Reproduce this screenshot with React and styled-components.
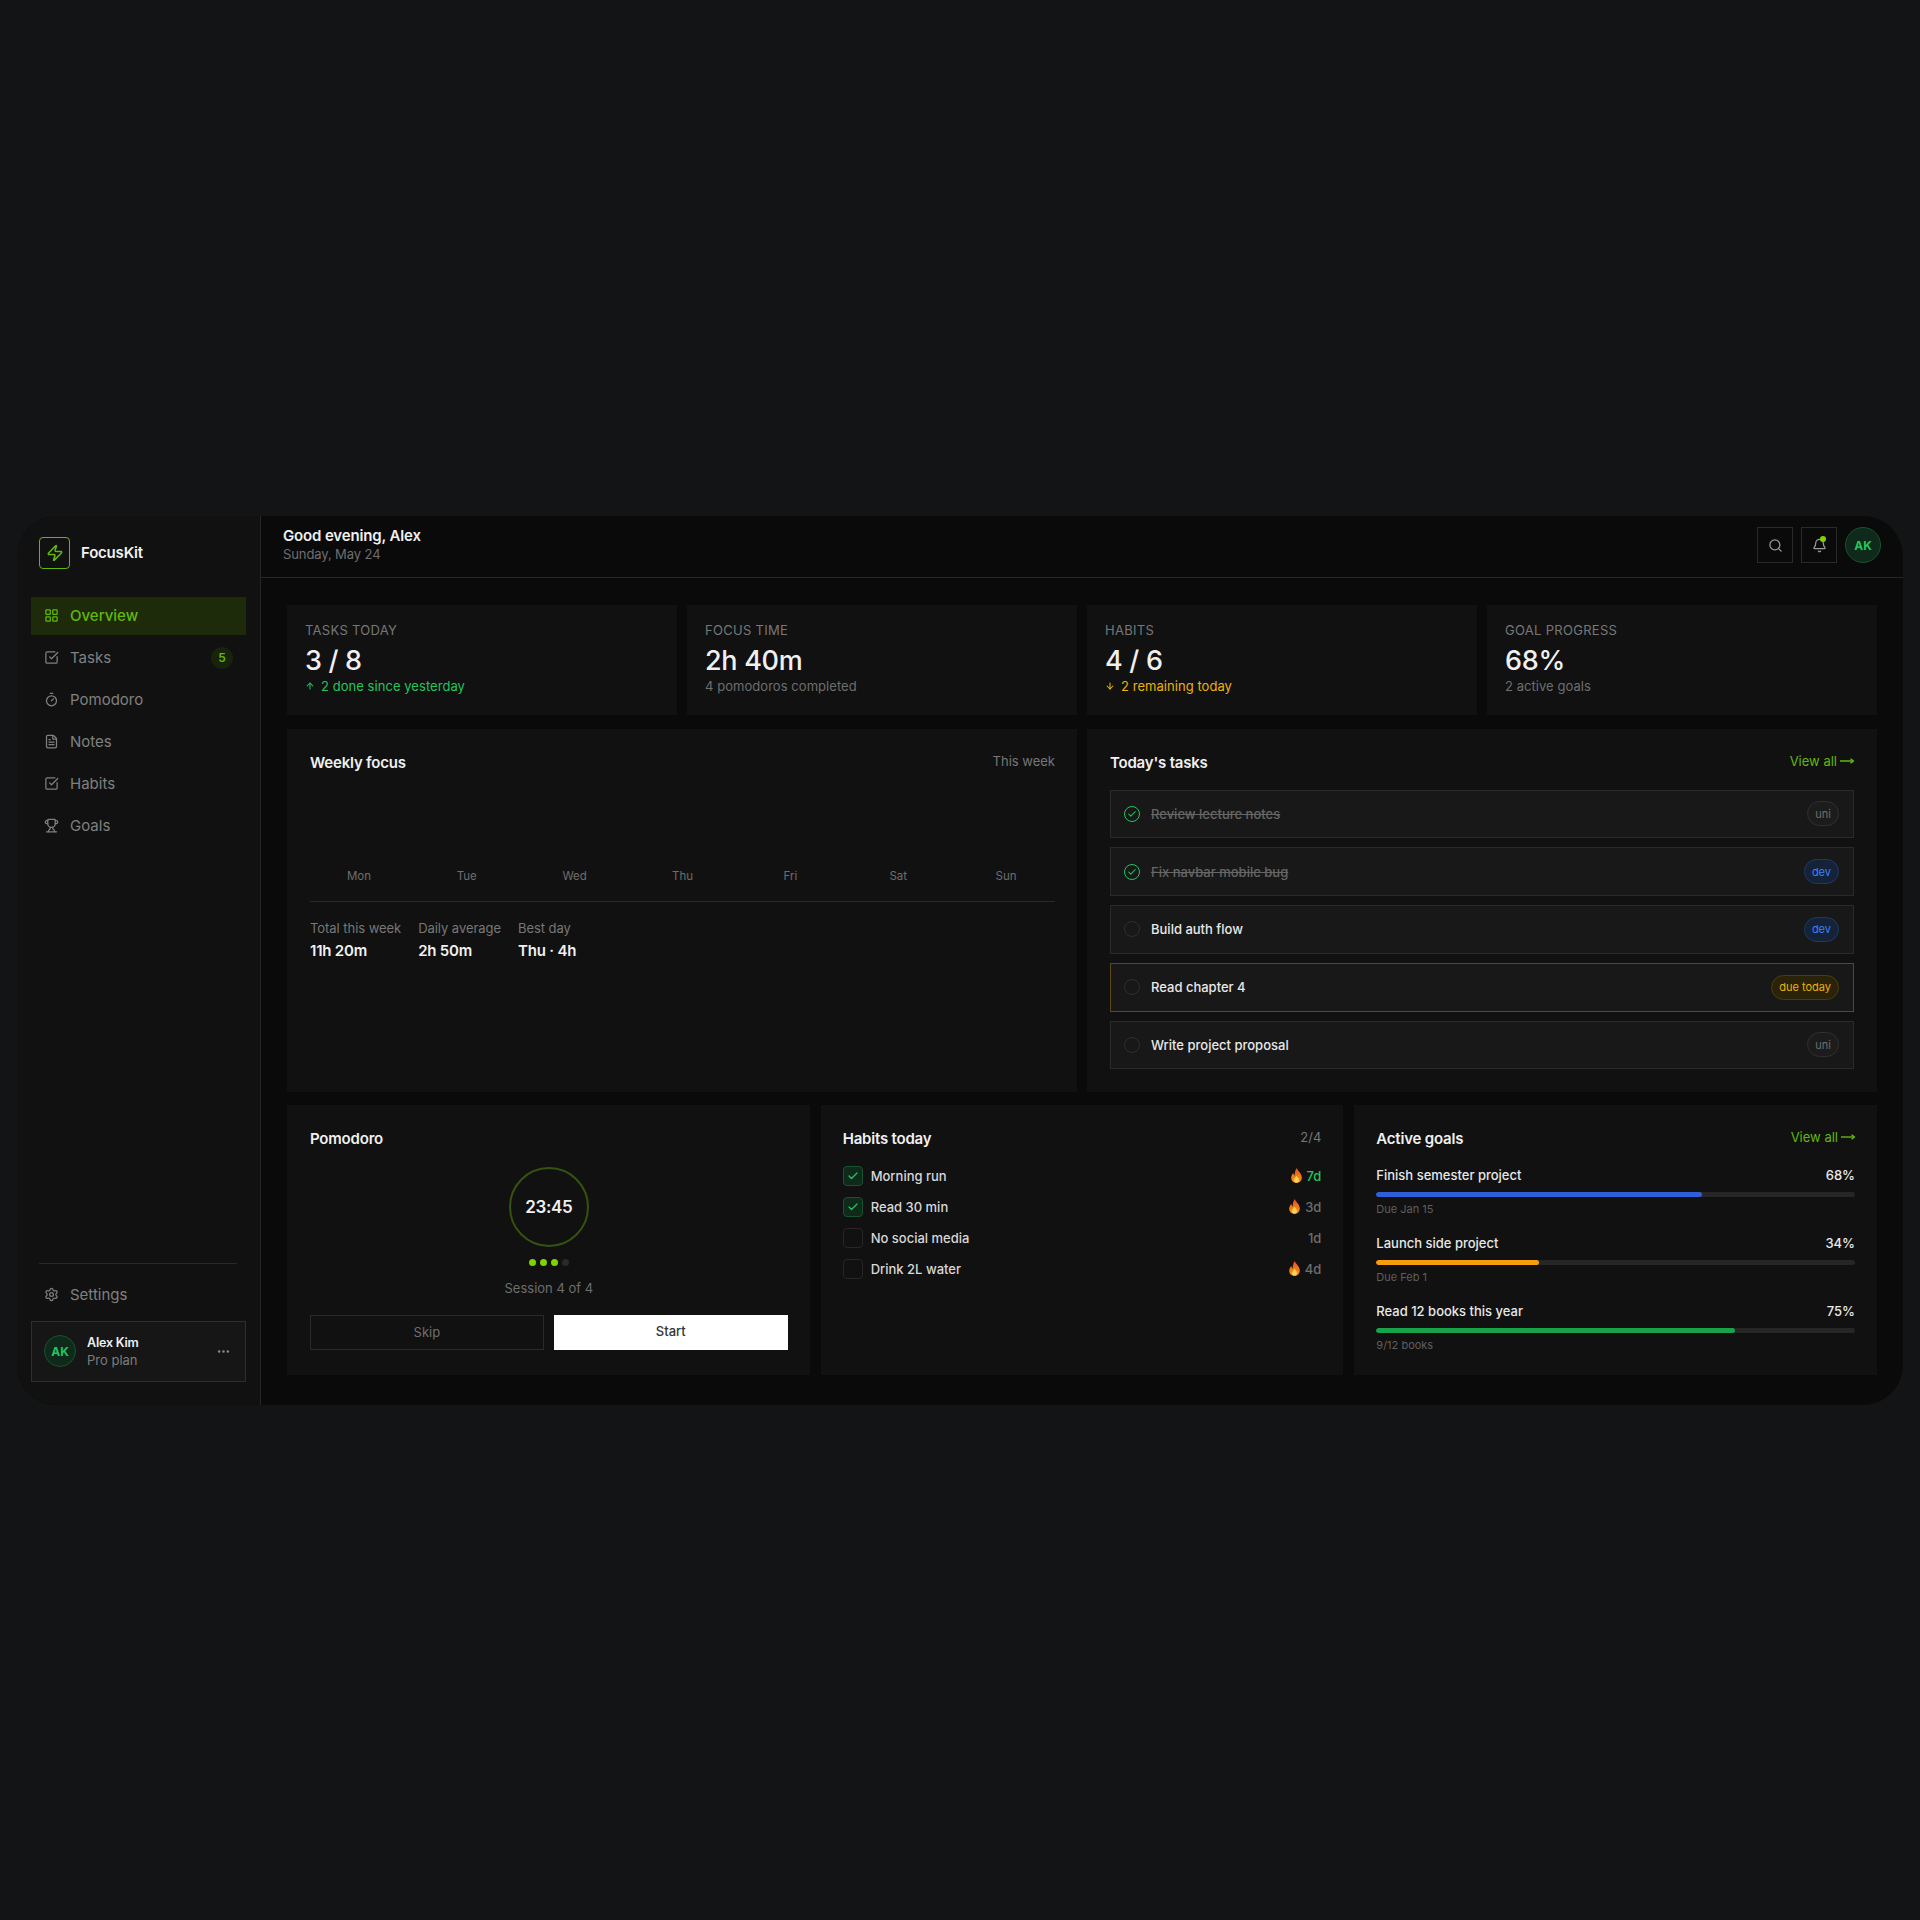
import React from "react";
import styled, { createGlobalStyle } from "styled-components";
import {
  LayoutGrid,
  SquareCheckBig,
  Timer,
  FileText,
  Trophy,
  Settings,
  Search,
  Bell,
  Zap,
  Check,
  MoreHorizontal,
  ArrowUp,
  ArrowDown,
} from "lucide-react";

const LIME = "#62b80a";
const GREEN = "#22c55e";
const AMBER = "#eab308";

const GlobalStyle = createGlobalStyle`
  html, body { margin: 0; padding: 0; background: #131415; }
  body { font-family: "Inter", "Liberation Sans", sans-serif; color: #f0f0f0; }
  * { box-sizing: border-box; }
`;

const Page = styled.div`
  width: 1920px;
  height: 1920px;
  display: flex;
  align-items: center;
  justify-content: center;
`;

const Frame = styled.div`
  width: 1886px;
  height: 889px;
  display: flex;
  border-radius: 40px;
  overflow: hidden;
  background: #0a0a0a;
`;

const Sidebar = styled.aside`
  width: 244px;
  flex-shrink: 0;
  display: flex;
  flex-direction: column;
  padding: 21px 14px 23px;
  background: #111111;
  border-right: 1px solid #262626;
`;

const Brand = styled.div`
  display: flex;
  align-items: center;
  gap: 11px;
  height: 32px;
  margin: 0 0 28px 8px;
  font-size: 15px;
  font-weight: 600;
  letter-spacing: -0.2px;
`;

const LogoBox = styled.div`
  width: 31px;
  height: 32px;
  display: flex;
  align-items: center;
  justify-content: center;
  border: 1.5px solid ${LIME};
  border-radius: 4px;
  color: ${LIME};
`;

const Nav = styled.nav`
  display: flex;
  flex-direction: column;
  gap: 4px;
`;

const NavItem = styled.div`
  height: 38px;
  display: flex;
  align-items: center;
  gap: 11px;
  padding: 0 13px;
  font-size: 15px;
  font-weight: ${(p) => (p.$active ? 500 : 400)};
  color: ${(p) => (p.$active ? LIME : "#808080")};
  background: ${(p) => (p.$active ? "#1d2b0b" : "transparent")};
`;

const NavBadge = styled.span`
  margin-left: auto;
  width: 22px;
  height: 22px;
  display: flex;
  align-items: center;
  justify-content: center;
  border-radius: 50%;
  background: #18230c;
  color: ${LIME};
  font-size: 12px;
  font-weight: 600;
`;

const SideFooter = styled.div`
  margin-top: auto;
  display: flex;
  flex-direction: column;
`;

const SideRule = styled.div`
  height: 1px;
  margin: 0 9px 12px 8px;
  background: #2a2a2a;
`;

const UserCard = styled.div`
  height: 61px;
  margin-top: 7px;
  display: flex;
  align-items: center;
  gap: 11px;
  padding: 0 14px 0 12px;
  background: #161616;
  border: 1px solid #2e2e2e;
`;

const Avatar = styled.div`
  width: ${(p) => p.$size}px;
  height: ${(p) => p.$size}px;
  flex-shrink: 0;
  display: flex;
  align-items: center;
  justify-content: center;
  border-radius: 50%;
  background: #0f2a1a;
  border: 1px solid #17532f;
  color: ${GREEN};
  font-size: 12px;
  font-weight: 700;
`;

const UserText = styled.div`
  flex: 1;
  display: flex;
  flex-direction: column;
  gap: 2px;
`;

const UserName = styled.div`
  font-size: 12.5px;
  font-weight: 600;
  letter-spacing: -0.2px;
`;

const UserPlan = styled.div`
  font-size: 13px;
  color: #7c7c7c;
`;

const Main = styled.main`
  flex: 1;
  min-width: 0;
  display: flex;
  flex-direction: column;
`;

const Topbar = styled.header`
  height: 62px;
  flex-shrink: 0;
  display: flex;
  align-items: center;
  justify-content: space-between;
  padding: 0 22px;
  border-bottom: 1px solid #262626;
`;

const Greeting = styled.div`
  display: flex;
  flex-direction: column;
  gap: 1px;
  padding-bottom: 4px;
`;

const Hello = styled.div`
  font-size: 15px;
  line-height: 18px;
  font-weight: 600;
  letter-spacing: -0.15px;
`;

const DateText = styled.div`
  font-size: 13px;
  line-height: 16px;
  color: #6e6e6e;
  letter-spacing: -0.1px;
`;

const TopActions = styled.div`
  display: flex;
  align-items: center;
  gap: 8px;
  padding-bottom: 2px;
`;

const IconButton = styled.div`
  position: relative;
  width: 36px;
  height: 36px;
  display: flex;
  align-items: center;
  justify-content: center;
  border: 1px solid #2a2a2a;
  color: #9a9a9a;
`;

const BellDot = styled.span`
  position: absolute;
  top: 8px;
  right: 10px;
  width: 6px;
  height: 6px;
  border-radius: 50%;
  background: #7ed300;
`;

const Content = styled.div`
  flex: 1;
  min-height: 0;
  display: grid;
  grid-template-rows: 110px 362px 270px;
  gap: 14px;
  padding: 27px 26px 29px;
`;

const StatRow = styled.div`
  display: grid;
  grid-template-columns: repeat(4, 1fr);
  gap: 10px;
`;

const Card = styled.section`
  background: #111111;
  padding: ${(p) => p.$padding || "24px 22px 23px 23px"};
  display: flex;
  flex-direction: column;
  min-width: 0;
`;

const StatLabel = styled.div`
  font-size: 13px;
  line-height: 16px;
  color: #777777;
  text-transform: uppercase;
  letter-spacing: 0.3px;
`;

const StatValue = styled.div`
  font-size: 27px;
  line-height: 34px;
  margin-top: 6px;
  font-weight: 500;
  letter-spacing: -0.3px;
`;

const StatSub = styled.div`
  display: flex;
  align-items: center;
  gap: 6px;
  font-size: 13px;
  line-height: 16px;
  letter-spacing: 0.05px;
  color: ${(p) => p.$color || "#6e6e6e"};
`;

const MiddleRow = styled.div`
  display: grid;
  grid-template-columns: repeat(2, 1fr);
  gap: 10px;
`;

const BottomRow = styled.div`
  display: grid;
  grid-template-columns: repeat(3, 1fr);
  gap: 11px;
`;

const CardHead = styled.div`
  display: flex;
  align-items: flex-start;
  justify-content: space-between;
  height: 20px;
`;

const CardTitle = styled.h2`
  margin: 0;
  font-size: 15px;
  line-height: 20px;
  font-weight: 600;
  letter-spacing: -0.2px;
`;

const HeadNote = styled.span`
  font-size: 13px;
  line-height: 16px;
  color: #777777;
`;

const ViewAll = styled.span`
  display: flex;
  align-items: center;
  gap: 3px;
  font-size: 13px;
  line-height: 16px;
  color: ${LIME};
`;

const Days = styled.div`
  display: grid;
  grid-template-columns: repeat(7, 1fr);
  gap: 10px;
  margin-top: 96px;
  padding-bottom: 18px;
  border-bottom: 1px solid #2a2a2a;
`;

const Day = styled.span`
  text-align: center;
  font-size: 11.5px;
  line-height: 14px;
  color: #6e6e6e;
`;

const WeekStats = styled.div`
  display: flex;
  gap: 17px;
  margin-top: 18px;
`;

const WeekStat = styled.div`
  display: flex;
  flex-direction: column;
  gap: 6px;
`;

const WeekLabel = styled.span`
  font-size: 13px;
  line-height: 16px;
  letter-spacing: -0.05px;
  color: #777777;
`;

const WeekValue = styled.span`
  font-size: 15px;
  line-height: 18px;
  font-weight: 600;
  letter-spacing: -0.2px;
`;

const TaskList = styled.div`
  display: flex;
  flex-direction: column;
  gap: 9px;
  margin-top: 17px;
`;

const TaskRow = styled.div`
  height: 48.75px;
  display: flex;
  align-items: center;
  gap: 11px;
  padding: 0 14px 0 13px;
  background: #181818;
  border: 1px solid ${(p) => (p.$due ? "#5c4a10" : "#2a2a2a")};
`;

const TaskCircle = styled.span`
  width: 16px;
  height: 16px;
  flex-shrink: 0;
  display: flex;
  align-items: center;
  justify-content: center;
  border-radius: 50%;
  border: 1.5px solid ${(p) => (p.$done ? GREEN : "#2e2e2e")};
  color: ${GREEN};
`;

const TaskName = styled.span`
  flex: 1;
  font-size: 13px;
  font-weight: 500;
  color: ${(p) => (p.$done ? "#666666" : "#e8e8e8")};
  text-decoration: ${(p) => (p.$done ? "line-through" : "none")};
`;

const tagColors = {
  uni: { color: "#6e6e6e", bg: "#1c1c1c", border: "#303030" },
  dev: { color: "#3b82f6", bg: "#14233a", border: "#1e3a5f" },
  due: { color: "#eab308", bg: "#2a2309", border: "#4a3c0c" },
};

const Tag = styled.span`
  height: 25px;
  display: flex;
  align-items: center;
  padding: 0 7px;
  border-radius: 999px;
  font-size: 11px;
  color: ${(p) => tagColors[p.$kind].color};
  background: ${(p) => tagColors[p.$kind].bg};
  border: 1px solid ${(p) => tagColors[p.$kind].border};
`;

const Timers = styled.div`
  display: flex;
  flex-direction: column;
  align-items: center;
  margin-top: 18px;
`;

const Ring = styled.div`
  width: 80px;
  height: 80px;
  display: flex;
  align-items: center;
  justify-content: center;
  border-radius: 50%;
  border: 2px solid #35530f;
  font-size: 17px;
  font-weight: 600;
  letter-spacing: -0.3px;
`;

const Dots = styled.div`
  display: flex;
  gap: 4px;
  margin-top: 12px;
`;

const Dot = styled.span`
  width: 7px;
  height: 7px;
  border-radius: 50%;
  background: ${(p) => (p.$on ? "#7ed300" : "#2a2a2a")};
`;

const Session = styled.div`
  margin-top: 14px;
  font-size: 13px;
  line-height: 16px;
  color: #6e6e6e;
`;

const Buttons = styled.div`
  display: grid;
  grid-template-columns: repeat(2, 1fr);
  gap: 10px;
  margin-top: 19px;
`;

const Button = styled.div`
  height: 35px;
  display: flex;
  align-items: center;
  justify-content: center;
  padding-bottom: ${(p) => (p.$primary ? 3 : 0)}px;
  font-size: 13px;
  font-weight: ${(p) => (p.$primary ? 500 : 400)};
  color: ${(p) => (p.$primary ? "#333333" : "#6e6e6e")};
  background: ${(p) => (p.$primary ? "#ffffff" : "transparent")};
  border: 1px solid ${(p) => (p.$primary ? "#ffffff" : "#2a2a2a")};
`;

const HabitList = styled.div`
  display: flex;
  flex-direction: column;
  gap: 11px;
  margin-top: 17px;
`;

const HabitRow = styled.div`
  height: 20px;
  display: flex;
  align-items: center;
  gap: 8px;
`;

const HabitBox = styled.span`
  width: 20px;
  height: 20px;
  display: flex;
  align-items: center;
  justify-content: center;
  border-radius: 4px;
  background: ${(p) => (p.$on ? "#0f2a1a" : "transparent")};
  border: 1px solid ${(p) => (p.$on ? "#17532f" : "#262626")};
  color: ${GREEN};
`;

const HabitName = styled.span`
  flex: 1;
  font-size: 13px;
  font-weight: 500;
  color: #d8d8d8;
`;

const Streak = styled.span`
  display: flex;
  align-items: center;
  gap: 5px;
  font-size: 13px;
  font-weight: 500;
  color: ${(p) => (p.$hot ? GREEN : "#6e6e6e")};
`;

const GoalList = styled.div`
  display: flex;
  flex-direction: column;
  gap: 19px;
  margin-top: 18px;
`;

const Goal = styled.div`
  display: flex;
  flex-direction: column;
`;

const GoalHead = styled.div`
  display: flex;
  justify-content: space-between;
  font-size: 13px;
  line-height: 16px;
  font-weight: 500;
  color: #e8e8e8;
`;

const Track = styled.div`
  height: 5px;
  margin-top: 9px;
  border-radius: 3px;
  background: #262626;
  overflow: hidden;
`;

const Fill = styled.div`
  height: 100%;
  border-radius: 3px;
  background: ${(p) => p.$color};
`;

const GoalSub = styled.div`
  margin-top: 5px;
  font-size: 11px;
  line-height: 14px;
  color: #5f5f5f;
`;

const Flame = () => (
  <svg width="11" height="15" viewBox="0 0 11 15">
    <defs>
      <linearGradient id="flameFill" x1="0" y1="0" x2="0" y2="1">
        <stop offset="0" stopColor="#e8501a" />
        <stop offset="1" stopColor="#f59a1c" />
      </linearGradient>
    </defs>
    <path d="M5.8 0C6.3 2.4 10.8 5.2 10.8 9.6C10.8 12.8 8.4 15 5.5 15C2.6 15 .2 12.8 .2 9.8C.2 7.6 1.4 6 2.4 5C2.6 6.2 3 7 3.8 7.4C3.6 4.6 4.4 1.8 5.8 0Z" fill="url(#flameFill)" />
    <path d="M5.6 7.6C6 9 8 10 8 12C8 13.6 6.8 14.6 5.5 14.6C4.2 14.6 3 13.6 3 12C3 10.4 4.8 9.4 5.6 7.6Z" fill="#fcd34d" />
  </svg>
);

const LongArrow = () => (
  <svg width="14" height="8" viewBox="0 0 14 8" fill="none" stroke="currentColor" strokeWidth="1.4">
    <path d="M0 4H13" />
    <path d="M10.5 1.8L13.4 4L10.5 6.2" />
  </svg>
);

const navItems = [
  { label: "Overview", icon: LayoutGrid, active: true },
  { label: "Tasks", icon: SquareCheckBig, badge: 5 },
  { label: "Pomodoro", icon: Timer },
  { label: "Notes", icon: FileText },
  { label: "Habits", icon: SquareCheckBig },
  { label: "Goals", icon: Trophy },
];

const stats = [
  { label: "Tasks today", value: "3 / 8", sub: "2 done since yesterday", color: GREEN, arrow: ArrowUp },
  { label: "Focus time", value: "2h 40m", sub: "4 pomodoros completed" },
  { label: "Habits", value: "4 / 6", sub: "2 remaining today", color: AMBER, arrow: ArrowDown },
  { label: "Goal progress", value: "68%", sub: "2 active goals" },
];

const days = ["Mon", "Tue", "Wed", "Thu", "Fri", "Sat", "Sun"];

const weekStats = [
  { label: "Total this week", value: "11h 20m" },
  { label: "Daily average", value: "2h 50m" },
  { label: "Best day", value: "Thu · 4h" },
];

const tasks = [
  { name: "Review lecture notes", done: true, tag: "uni", text: "uni" },
  { name: "Fix navbar mobile bug", done: true, tag: "dev", text: "dev" },
  { name: "Build auth flow", tag: "dev", text: "dev" },
  { name: "Read chapter 4", tag: "due", text: "due today" },
  { name: "Write project proposal", tag: "uni", text: "uni" },
];

const habits = [
  { name: "Morning run", on: true, streak: "7d", flame: true, hot: true },
  { name: "Read 30 min", on: true, streak: "3d", flame: true },
  { name: "No social media", streak: "1d" },
  { name: "Drink 2L water", streak: "4d", flame: true },
];

const goals = [
  { name: "Finish semester project", pct: 68, color: "#2f5fd8", sub: "Due Jan 15" },
  { name: "Launch side project", pct: 34, color: "#f59e0b", sub: "Due Feb 1" },
  { name: "Read 12 books this year", pct: 75, color: "#16a34a", sub: "9/12 books" },
];

const App = () => {
  return (
    <Page>
      <GlobalStyle />
      <Frame>
        <Sidebar>
          <Brand>
            <LogoBox>
              <Zap size={18} strokeWidth={2} />
            </LogoBox>
            FocusKit
          </Brand>
          <Nav>
            {navItems.map((item) => (
              <NavItem key={item.label} $active={item.active}>
                <item.icon size={15} strokeWidth={2} />
                {item.label}
                {item.badge && <NavBadge>{item.badge}</NavBadge>}
              </NavItem>
            ))}
          </Nav>
          <SideFooter>
            <SideRule />
            <NavItem>
              <Settings size={15} strokeWidth={2} />
              Settings
            </NavItem>
            <UserCard>
              <Avatar $size={32}>AK</Avatar>
              <UserText>
                <UserName>Alex Kim</UserName>
                <UserPlan>Pro plan</UserPlan>
              </UserText>
              <MoreHorizontal size={15} color="#8a8a8a" />
            </UserCard>
          </SideFooter>
        </Sidebar>
        <Main>
          <Topbar>
            <Greeting>
              <Hello>Good evening, Alex</Hello>
              <DateText>Sunday, May 24</DateText>
            </Greeting>
            <TopActions>
              <IconButton>
                <Search size={15} />
              </IconButton>
              <IconButton>
                <Bell size={15} />
                <BellDot />
              </IconButton>
              <Avatar $size={36}>AK</Avatar>
            </TopActions>
          </Topbar>
          <Content>
            <StatRow>
              {stats.map((s) => (
                <Card key={s.label} $padding="17px 18px 0">
                  <StatLabel>{s.label}</StatLabel>
                  <StatValue>{s.value}</StatValue>
                  <StatSub $color={s.color}>
                    {s.arrow && <s.arrow size={10} strokeWidth={2.5} />}
                    {s.sub}
                  </StatSub>
                </Card>
              ))}
            </StatRow>
            <MiddleRow>
              <Card>
                <CardHead>
                  <CardTitle>Weekly focus</CardTitle>
                  <HeadNote>This week</HeadNote>
                </CardHead>
                <Days>
                  {days.map((d) => (
                    <Day key={d}>{d}</Day>
                  ))}
                </Days>
                <WeekStats>
                  {weekStats.map((s) => (
                    <WeekStat key={s.label}>
                      <WeekLabel>{s.label}</WeekLabel>
                      <WeekValue>{s.value}</WeekValue>
                    </WeekStat>
                  ))}
                </WeekStats>
              </Card>
              <Card $padding="24px 23px 23px 23px">
                <CardHead>
                  <CardTitle>Today's tasks</CardTitle>
                  <ViewAll>
                    View all
                    <LongArrow />
                  </ViewAll>
                </CardHead>
                <TaskList>
                  {tasks.map((t) => (
                    <TaskRow key={t.name} $due={t.tag === "due"}>
                      <TaskCircle $done={t.done}>
                        {t.done && <Check size={10} strokeWidth={2.5} />}
                      </TaskCircle>
                      <TaskName $done={t.done}>{t.name}</TaskName>
                      <Tag $kind={t.tag}>{t.text}</Tag>
                    </TaskRow>
                  ))}
                </TaskList>
              </Card>
            </MiddleRow>
            <BottomRow>
              <Card>
                <CardHead>
                  <CardTitle>Pomodoro</CardTitle>
                </CardHead>
                <Timers>
                  <Ring>23:45</Ring>
                  <Dots>
                    <Dot $on />
                    <Dot $on />
                    <Dot $on />
                    <Dot />
                  </Dots>
                  <Session>Session 4 of 4</Session>
                </Timers>
                <Buttons>
                  <Button>Skip</Button>
                  <Button $primary>Start</Button>
                </Buttons>
              </Card>
              <Card $padding="24px 22px 23px">
                <CardHead>
                  <CardTitle>Habits today</CardTitle>
                  <HeadNote>2/4</HeadNote>
                </CardHead>
                <HabitList>
                  {habits.map((h) => (
                    <HabitRow key={h.name}>
                      <HabitBox $on={h.on}>
                        {h.on && <Check size={12} strokeWidth={2.5} />}
                      </HabitBox>
                      <HabitName>{h.name}</HabitName>
                      <Streak $hot={h.hot}>
                        {h.flame && <Flame />}
                        {h.streak}
                      </Streak>
                    </HabitRow>
                  ))}
                </HabitList>
              </Card>
              <Card $padding="24px 22px 23px">
                <CardHead>
                  <CardTitle>Active goals</CardTitle>
                  <ViewAll>
                    View all
                    <LongArrow />
                  </ViewAll>
                </CardHead>
                <GoalList>
                  {goals.map((g) => (
                    <Goal key={g.name}>
                      <GoalHead>
                        <span>{g.name}</span>
                        <span>{g.pct}%</span>
                      </GoalHead>
                      <Track>
                        <Fill $color={g.color} style={{ width: `${g.pct}%` }} />
                      </Track>
                      <GoalSub>{g.sub}</GoalSub>
                    </Goal>
                  ))}
                </GoalList>
              </Card>
            </BottomRow>
          </Content>
        </Main>
      </Frame>
    </Page>
  );
};

export default App;
